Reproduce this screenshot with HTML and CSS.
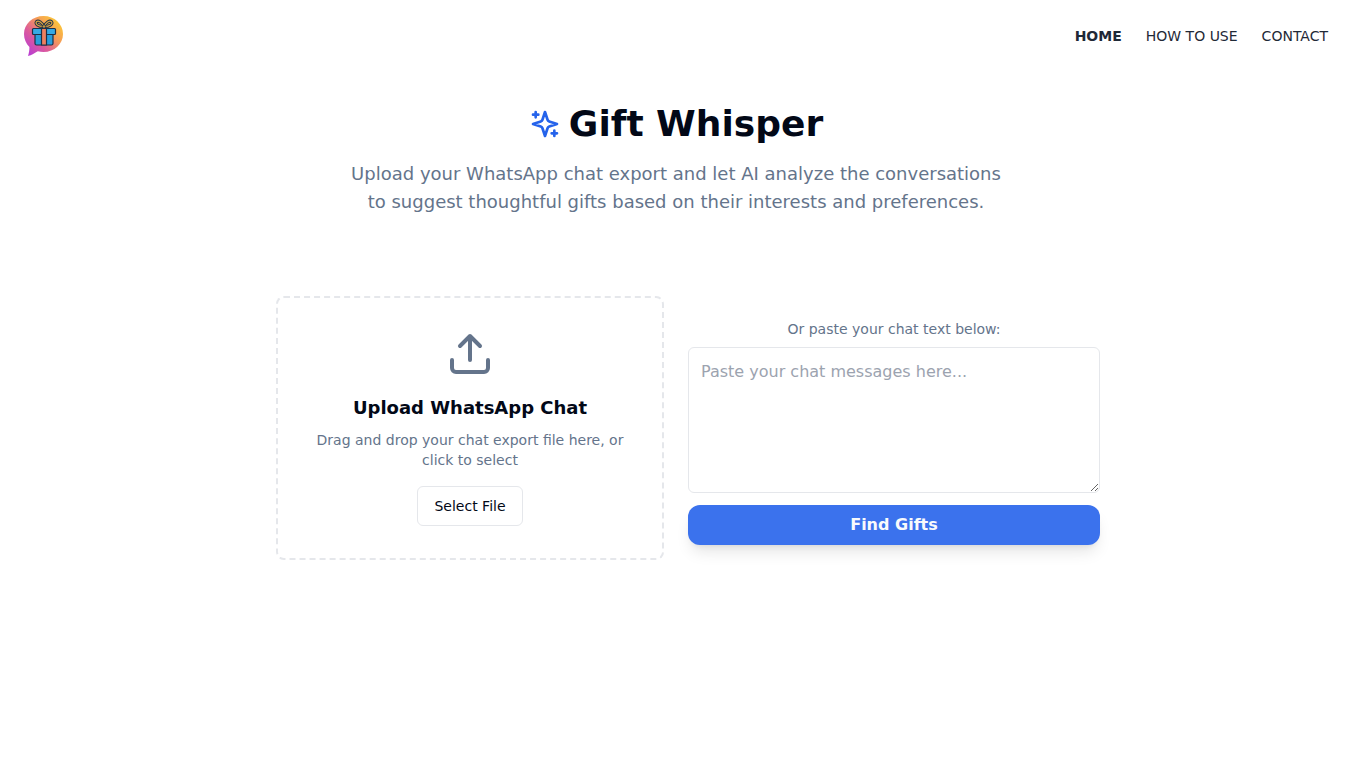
FILE: index.html
```html
<!DOCTYPE html>
<html lang="en">
<head>
<meta charset="utf-8">
<meta name="viewport" content="width=device-width, initial-scale=1">
<title>Gift Whisper</title>
<link rel="stylesheet" href="styles.css">
</head>
<body>
<header class="site-header">
  <a class="logo" href="#" aria-label="Gift Whisper home">
    <svg viewBox="0 0 40 40" width="40" height="40" aria-hidden="true">
      <defs>
        <linearGradient id="bubble" x1="0.1" y1="0.9" x2="0.85" y2="0.15">
          <stop offset="0" stop-color="#bb3fd0"/>
          <stop offset="0.35" stop-color="#dc5a9c"/>
          <stop offset="0.7" stop-color="#f59a58"/>
          <stop offset="1" stop-color="#fbc23c"/>
        </linearGradient>
      </defs>
      <path fill="url(#bubble)" d="M19.500 0C30.500 0 39 8 39 18S30.500 36 19.500 36c-2 0-4-.3-5.700-.8C11 37 7.500 39 4 40c1-3 1.500-6 1.400-9C2 27.500 0 23 0 18 0 8 8.500 0 19.500 0Z"/>
      <g stroke="#1d3047" stroke-width="1.200" stroke-linejoin="round">
        <path fill="#299ddb" d="M11 18h18v9.500q0 1.500-1.500 1.500h-15q-1.500 0-1.500-1.500Z"/>
        <rect x="8.500" y="12.500" width="23" height="6" rx="1" fill="#35a9e4"/>
        <path fill="#ef805f" d="M17.500 12.500h5V29h-5Z"/>
        <path fill="none" stroke-width="3.200" d="M20 10.500c-2-4-5.500-6.500-7.500-4.800-1.600 2 1.500 5 7.500 4.800Zm0 0c2-4 5.500-6.500 7.500-4.800 1.600 2-1.500 5-7.500 4.800Z"/>
        <path fill="none" stroke="#d9a441" stroke-width="1.300" d="M20 10.500c-2-4-5.500-6.500-7.500-4.800-1.600 2 1.500 5 7.500 4.800Zm0 0c2-4 5.500-6.500 7.500-4.800 1.600 2-1.500 5-7.500 4.800Z"/>
        <circle cx="20" cy="10.500" r="1.800" fill="#c9963c" stroke-width="1"/>
      </g>
    </svg>
  </a>
  <nav class="site-nav" aria-label="Main">
    <a class="nav-link nav-link-active" href="#" aria-current="page">HOME</a>
    <a class="nav-link" href="#how-to-use">HOW TO USE</a>
    <a class="nav-link" href="#contact">CONTACT</a>
  </nav>
</header>

<main class="page">
  <section class="hero">
    <h1 class="hero-title">
      <svg class="line-icon hero-icon" viewBox="0 0 24 24" width="32" height="32" aria-hidden="true">
        <path d="m12 3-1.912 5.813a2 2 0 0 1-1.275 1.275L3 12l5.813 1.912a2 2 0 0 1 1.275 1.275L12 21l1.912-5.813a2 2 0 0 1 1.275-1.275L21 12l-5.813-1.912a2 2 0 0 1-1.275-1.275L12 3Z"/>
        <path d="M5 3v4M19 17v4M3 5h4M17 19h4"/>
      </svg>
      Gift Whisper
    </h1>
    <p class="hero-text">Upload your WhatsApp chat export and let AI analyze the conversations to suggest thoughtful gifts based on their interests and preferences.</p>
  </section>

  <section class="panels">
    <div class="dropzone">
      <svg class="line-icon upload-icon" viewBox="0 0 24 24" width="48" height="48" aria-hidden="true">
        <path d="M21 15v4a2 2 0 0 1-2 2H5a2 2 0 0 1-2-2v-4M17 8l-5-5-5 5M12 3v12"/>
      </svg>
      <h2 class="dropzone-title">Upload WhatsApp Chat</h2>
      <p class="dropzone-text">Drag and drop your chat export file here, or click to select</p>
      <button class="select-button" type="button">Select File</button>
    </div>
    <form class="paste-form">
      <label class="paste-label" for="chat-text">Or paste your chat text below:</label>
      <textarea class="paste-input" id="chat-text" rows="5" placeholder="Paste your chat messages here..."></textarea>
      <button class="find-button" type="button">Find Gifts</button>
    </form>
  </section>
</main>
</body>
</html>
```
FILE: styles.css
```css
*,
*::before,
*::after {
  box-sizing: border-box;
}

body {
  margin: 0;
  background: #fff;
  color: #020817;
  font-family: "DejaVu Sans", sans-serif;
  font-size: 16px;
  line-height: 24px;
}

h1,
h2,
p {
  margin: 0;
}

button,
textarea {
  font: inherit;
}

.site-header {
  display: flex;
  align-items: center;
  justify-content: space-between;
  padding: 16px 24px;
}

.logo svg {
  display: block;
}

.site-nav {
  display: flex;
  gap: 24px;
  font-size: 14px;
  line-height: 20px;
}

.nav-link {
  color: #1f2937;
  text-decoration: none;
}

.nav-link-active {
  font-weight: 700;
}

.line-icon {
  flex: none;
  fill: none;
  stroke: currentColor;
  stroke-width: 2;
  stroke-linecap: round;
  stroke-linejoin: round;
}

.page {
  max-width: 896px;
  margin: 0 auto;
  padding: 32px 24px;
}

.hero {
  max-width: 672px;
  margin: 0 auto 80px;
  text-align: center;
}

.hero-title {
  display: flex;
  align-items: center;
  justify-content: center;
  gap: 8px;
  margin-bottom: 16px;
  font-size: 36px;
  font-weight: 700;
  line-height: 40px;
}

.hero-icon {
  color: #2563eb;
}

.hero-text {
  color: #64748b;
  font-size: 18px;
  line-height: 28px;
}

.panels {
  display: grid;
  grid-template-columns: repeat(2, minmax(0, 1fr));
  gap: 24px;
}

.dropzone {
  display: flex;
  flex-direction: column;
  align-items: center;
  margin-left: 24px;
  padding: 32px;
  border: 2px dashed #e5e7eb;
  border-radius: 8px;
  text-align: center;
}

.upload-icon {
  margin-bottom: 16px;
  color: #64748b;
}

.dropzone-title {
  margin-bottom: 8px;
  font-size: 18px;
  font-weight: 700;
  line-height: 28px;
}

.dropzone-text {
  margin-bottom: 16px;
  color: #64748b;
  font-size: 14px;
  line-height: 20px;
}

.select-button {
  height: 40px;
  padding: 0 16px;
  border: 1px solid #e5e7eb;
  border-radius: 6px;
  background: #fff;
  color: #020817;
  font-size: 14px;
  line-height: 20px;
}

.paste-form {
  display: flex;
  flex-direction: column;
  justify-content: center;
  padding-top: 8px;
}

.paste-label {
  margin-bottom: 8px;
  color: #64748b;
  font-size: 14px;
  line-height: 20px;
  text-align: center;
}

.paste-input {
  display: block;
  width: 100%;
  margin: 0 0 12px;
  padding: 12px;
  border: 1px solid #e5e7eb;
  border-radius: 6px;
  background: #fff;
  color: #020817;
  resize: vertical;
}

.paste-input::placeholder {
  color: #9ca3af;
}

.find-button {
  height: 40px;
  padding: 0 16px;
  border: 0;
  border-radius: 12px;
  background: #3b72ed;
  box-shadow: 0 10px 15px -3px rgb(0 0 0 / 10%), 0 4px 6px -4px rgb(0 0 0 / 10%);
  color: #f8fafc;
  font-weight: 700;
}

@media (max-width: 700px) {
  .panels {
    grid-template-columns: minmax(0, 1fr);
  }

  .dropzone {
    margin-left: 0;
  }
}
```
